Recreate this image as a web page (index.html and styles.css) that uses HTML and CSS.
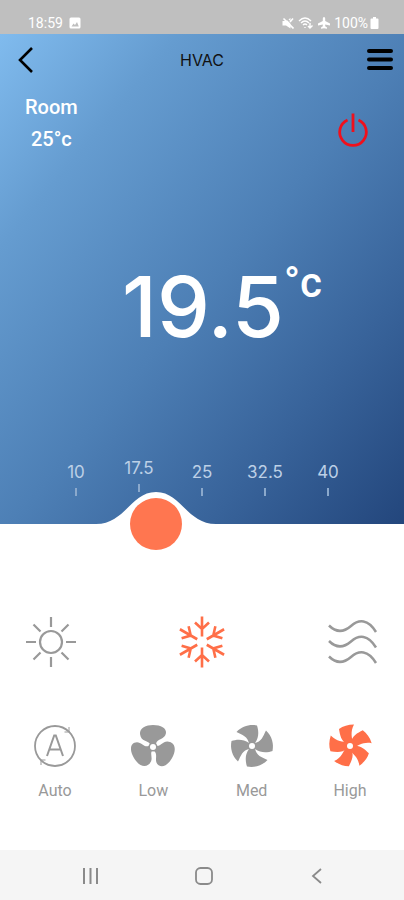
FILE: index.html
```html
<!DOCTYPE html>
<html lang="en">
<head>
    <meta charset="UTF-8">
    <meta name="viewport" content="width=device-width, initial-scale=1.0">
    <title>HVAC</title>
    <link rel="stylesheet" href="styles.css">
</head>
<body>
    <div class="status-bar">
        <span>18:59</span>
        <svg width="12" height="12" viewBox="0 0 12 12">
            <rect x="0.5" y="0.5" width="11" height="11" rx="1.5" fill="#fff"/>
            <path d="M2.5 9.5 L4.5 6.5 L6 8 L8 5 L9.8 9.5 Z" fill="#bfbfbf"/>
        </svg>
        <div class="status-icons">
            <svg width="12" height="12" viewBox="0 0 12 12">
                <path d="M0.5 4 H4 L8.5 1 V11.5 L4 8.5 H0.5 Z" fill="#fff"/>
                <path d="M3 0 L12 9" stroke="#bfbfbf" stroke-width="1.6"/>
                <path d="M8 5 L11 1.5 M1.5 1.5 L11.5 11.5" stroke="#fff" stroke-width="1.6"/>
            </svg>
            <svg width="16" height="12" viewBox="0 0 16 12" fill="none" stroke="#fff" stroke-width="1.4">
                <path d="M1 4 Q7 -2 13 4 M3 6 Q7 2 11 6 M5 8 Q7 6 9 8"/>
                <path d="M7 10 V11 M12 6 V11 M10 9 L12 11 L14.5 8.5"/>
            </svg>
            <svg width="12" height="12" viewBox="0 0 12 12">
                <path d="M6 0 Q7.2 0 7.2 1.5 V4 L12 6.6 V8.4 L7.2 7.5 V9.3 L9 10.5 V11.8 L6 11.2 L3 11.8 V10.5 L4.8 9.3 V7.5 L0 8.4 V6.6 L4.8 4 V1.5 Q4.8 0 6 0" fill="#fff"/>
            </svg>
            <span class="battery">
                100%
                <svg width="9" height="12" viewBox="0 0 9 12">
                    <path d="M3 0 H6 V1.5 H7.5 Q8.5 1.5 8.5 2.5 V11 Q8.5 12 7.5 12 H1.5 Q0.5 12 0.5 11 V2.5 Q0.5 1.5 1.5 1.5 H3 Z" fill="#fff"/>
                </svg>
            </span>
        </div>
    </div>

    <section class="hero">
        <header>
            <a class="back" href="#" aria-label="Back">
                <svg width="16" height="28" viewBox="0 0 16 28">
                    <path d="M14 2 L2 14 L14 26" fill="none" stroke="#000" stroke-width="2.6"/>
                </svg>
            </a>
            <h1>HVAC</h1>
            <button class="menu" type="button" aria-label="Menu">
                <svg width="26" height="24" viewBox="0 0 26 24">
                    <path d="M2 3 H24 M2 11.5 H24 M2 20 H24" stroke="#000" stroke-width="4" stroke-linecap="round"/>
                </svg>
            </button>
        </header>

        <div class="room-row">
            <div class="room">
                <p>Room</p>
                <p>25°c</p>
            </div>
            <button class="power" type="button" aria-label="Power">
                <svg width="32" height="36" viewBox="0 0 32 36" fill="none" stroke="#f0101c" stroke-width="2.8">
                    <path d="M10.5 8 A13.3 13.3 0 1 0 21.5 8"/>
                    <path d="M16 1.5 V20"/>
                </svg>
            </button>
        </div>

        <p class="temperature"><span id="target">19.5</span><span class="unit">°c</span></p>

        <div class="dial" id="dial" style="--pos: 0.3167">
            <ul class="scale">
                <li>10</li>
                <li class="raised">17.5</li>
                <li>25</li>
                <li>32.5</li>
                <li>40</li>
            </ul>
            <svg class="bump" width="120" height="32" viewBox="0 0 120 32">
                <path d="M0 32 C29 32 35 0 60 0 S91 32 120 32 Z" fill="#fff"/>
            </svg>
            <input id="slider" type="range" min="10" max="40" step="0.5" value="19.5" aria-label="Target temperature">
        </div>
    </section>

    <main>
        <div class="modes">
            <button type="button" aria-label="Heat">
                <svg width="52" height="52" viewBox="0 0 52 52" fill="none" stroke="#999" stroke-width="2.2">
                    <circle cx="26" cy="26" r="11"/>
                    <path d="M26 1 V11 M26 41 V51 M1 26 H11 M41 26 H51 M8.5 8.5 L15.5 15.5 M36.5 36.5 L43.5 43.5 M8.5 43.5 L15.5 36.5 M36.5 15.5 L43.5 8.5"/>
                </svg>
            </button>
            <button type="button" aria-label="Cool">
                <svg width="52" height="52" viewBox="-26 -26 52 52" fill="none" stroke="#ff6f48" stroke-width="2.6">
                    <defs>
                        <path id="flake" d="M0 -25.5 V-5.5 M-7 -19.5 L0 -13 L7 -19.5"/>
                    </defs>
                    <use href="#flake"/>
                    <use href="#flake" transform="rotate(60)"/>
                    <use href="#flake" transform="rotate(120)"/>
                    <use href="#flake" transform="rotate(180)"/>
                    <use href="#flake" transform="rotate(240)"/>
                    <use href="#flake" transform="rotate(300)"/>
                </svg>
            </button>
            <button type="button" aria-label="Fan">
                <svg width="52" height="52" viewBox="0 0 52 52" fill="none" stroke="#999" stroke-width="2.5">
                    <path id="wave" d="M2 9.5 C10 17.5 17 16 24 10 C32 3 41 3 49 16"/>
                    <use href="#wave" y="15.5"/>
                    <use href="#wave" y="31"/>
                </svg>
            </button>
        </div>

        <div class="speeds">
            <button class="speed" type="button">
                <svg width="44" height="44" viewBox="0 0 44 44" fill="none" stroke="#999" stroke-width="1.8">
                    <circle cx="22" cy="22" r="20"/>
                    <path d="M14 32 L21.2 11.5 H22.8 L30 32 M16.5 25.5 H27.5" stroke-width="2"/>
                    <path d="M36 3 V8 H31.5 M8 41 V36 H12.5" stroke-width="1"/>
                </svg>
                Auto
            </button>
            <button class="speed" type="button">
                <svg width="44" height="44" viewBox="-22 -22 44 44" fill="#999">
                    <defs>
                        <path id="blade3" d="M-3 -3 C-5 -7 -12 -5 -13 -13 C-13.5 -19 -7 -22 0 -22 C8 -22 13.5 -19 13 -14 C12 -7 4 -9 3 -3 Z"/>
                    </defs>
                    <g transform="translate(0 1)">
                        <use href="#blade3"/>
                        <use href="#blade3" transform="rotate(120)"/>
                        <use href="#blade3" transform="rotate(240)"/>
                        <circle r="4.6"/>
                        <circle r="3" fill="#fff"/>
                    </g>
                </svg>
                Low
            </button>
            <button class="speed" type="button">
                <svg width="44" height="44" viewBox="-22 -22 44 44" fill="#999">
                    <defs>
                        <path id="blade4" d="M-3 -2 C-4 -10 -10 -11 -15.5 -14 C-10 -20 -2 -22 5 -20.5 C6.5 -16 7.5 -9 3 -3 Z"/>
                    </defs>
                    <use href="#blade4"/>
                    <use href="#blade4" transform="rotate(90)"/>
                    <use href="#blade4" transform="rotate(180)"/>
                    <use href="#blade4" transform="rotate(270)"/>
                    <circle r="4.2"/>
                    <circle r="3" fill="#fff"/>
                </svg>
                Med
            </button>
            <button class="speed" type="button">
                <svg width="44" height="44" viewBox="-22 -22 44 44" fill="#ff6f48">
                    <defs>
                        <path id="blade5" d="M-3 -2 C-9 -5 -10 -11 -11 -17 C-7 -20 -2 -21.5 4 -21.5 C0 -14 2 -8 3 -3 Z"/>
                    </defs>
                    <use href="#blade5"/>
                    <use href="#blade5" transform="rotate(72)"/>
                    <use href="#blade5" transform="rotate(144)"/>
                    <use href="#blade5" transform="rotate(216)"/>
                    <use href="#blade5" transform="rotate(288)"/>
                    <circle r="4.2"/>
                    <circle r="3" fill="#fff"/>
                </svg>
                High
            </button>
        </div>
    </main>

    <nav>
        <button type="button" aria-label="Recent apps">
            <svg width="18" height="18" viewBox="0 0 18 18">
                <path d="M2 1 V17 M8.5 1 V17 M15 1 V17" stroke="#8a8a8a" stroke-width="2"/>
            </svg>
        </button>
        <button type="button" aria-label="Home">
            <svg width="18" height="18" viewBox="0 0 18 18">
                <rect x="1" y="1" width="16" height="16" rx="4.5" fill="none" stroke="#8a8a8a" stroke-width="1.8"/>
            </svg>
        </button>
        <button type="button" aria-label="Previous screen">
            <svg width="18" height="18" viewBox="0 0 18 18">
                <path d="M13 2 L5 9 L13 16" fill="none" stroke="#8a8a8a" stroke-width="1.8"/>
            </svg>
        </button>
    </nav>

    <script>
        const slider = document.getElementById('slider');
        const dial = document.getElementById('dial');
        const target = document.getElementById('target');

        slider.addEventListener('input', () => {
            dial.style.setProperty('--pos', (slider.value - 10) / 30);
            target.innerText = Number(slider.value).toFixed(1);
        });
    </script>
</body>
</html>
```
FILE: styles.css
```css
* {
    margin: 0;
    padding: 0;
    box-sizing: border-box;
}
body {
    font-family: Roboto, Arial, sans-serif;
    background-color: white;
    display: flex;
    flex-direction: column;
    min-height: 100vh;
}
svg {
    display: block;
}
button {
    font: inherit;
    color: inherit;
    background: none;
    border: none;
    cursor: pointer;
}
.status-bar {
    display: flex;
    align-items: center;
    gap: 6px;
    height: 34px;
    padding: 12px 25px 0 28px;
    background-color: #bfbfbf;
    color: white;
    font-size: 14px;
}
.status-icons {
    display: flex;
    align-items: center;
    gap: 4px;
    margin-left: auto;
}
.battery {
    display: flex;
    align-items: center;
    gap: 2px;
}
.hero {
    display: flex;
    flex-direction: column;
    color: white;
    background: linear-gradient(130deg, #80bbee 0%, #659cd0 22%, #4d7fb5 52%, #38639a 76%, #23467c 100%);
}
header {
    display: grid;
    grid-template-columns: 1fr auto 1fr;
    align-items: center;
    height: 52px;
    padding: 0 11px;
    color: #111;
}
h1 {
    font-family: Inter, Arial, sans-serif;
    font-size: 16px;
    font-weight: 400;
}
.back {
    justify-self: start;
    padding-left: 7px;
}
.menu {
    justify-self: end;
}
.room-row {
    display: flex;
    align-items: center;
    justify-content: space-between;
    padding: 5px 35px 0 25px;
}
.room {
    font-size: 20px;
    font-weight: 500;
    line-height: 32px;
    text-align: center;
}
.power {
    margin-top: 14px;
}
.temperature {
    display: flex;
    justify-content: center;
    margin-top: 102px;
    padding-left: 40px;
    font-family: Inter, Arial, sans-serif;
    font-size: 84px;
    font-weight: 500;
    line-height: 100px;
}
.unit {
    font-family: Roboto, Arial, sans-serif;
    font-size: 42px;
    line-height: 52px;
}
.dial {
    position: relative;
    margin-top: 101px;
    padding: 0 50px 28px;
}
.scale {
    display: flex;
    align-items: flex-end;
    justify-content: space-between;
    list-style: none;
    font-family: Inter, Arial, sans-serif;
    font-size: 17px;
    line-height: 20px;
    color: #bdd0e6;
}
.scale li {
    display: flex;
    flex-direction: column;
    align-items: center;
    gap: 6px;
    width: 52px;
}
.scale li::after {
    content: "";
    width: 2px;
    height: 8px;
    background-color: #8ba9cc;
}
.scale .raised {
    padding-bottom: 4px;
}
/* the thumb is 52px wide, so its centre travels from 76px to 100% - 76px */
.bump {
    position: absolute;
    bottom: 0;
    left: calc(76px + (100% - 152px) * var(--pos));
    transform: translateX(-50%);
}
#slider {
    position: absolute;
    left: 50px;
    bottom: -26px;
    width: calc(100% - 100px);
    height: 52px;
    appearance: none;
    background: none;
    cursor: pointer;
}
#slider::-webkit-slider-thumb {
    appearance: none;
    width: 52px;
    height: 52px;
    border-radius: 50%;
    background-color: #ff7650;
}
#slider::-moz-range-thumb {
    width: 52px;
    height: 52px;
    border: none;
    border-radius: 50%;
    background-color: #ff7650;
}
main {
    flex: 1;
    padding: 92px 25px 40px;
}
.modes {
    display: flex;
    justify-content: space-between;
}
.speeds {
    display: flex;
    justify-content: space-between;
    margin-top: 56px;
    padding: 0 7px 0 8px;
}
.speed {
    display: flex;
    flex-direction: column;
    align-items: center;
    gap: 13px;
    width: 44px;
    font-size: 16px;
    line-height: 20px;
    color: #999;
}
nav {
    display: flex;
    align-items: center;
    justify-content: space-between;
    height: 50px;
    padding: 2px 78px 0 82px;
    background-color: #f5f5f5;
}
```
